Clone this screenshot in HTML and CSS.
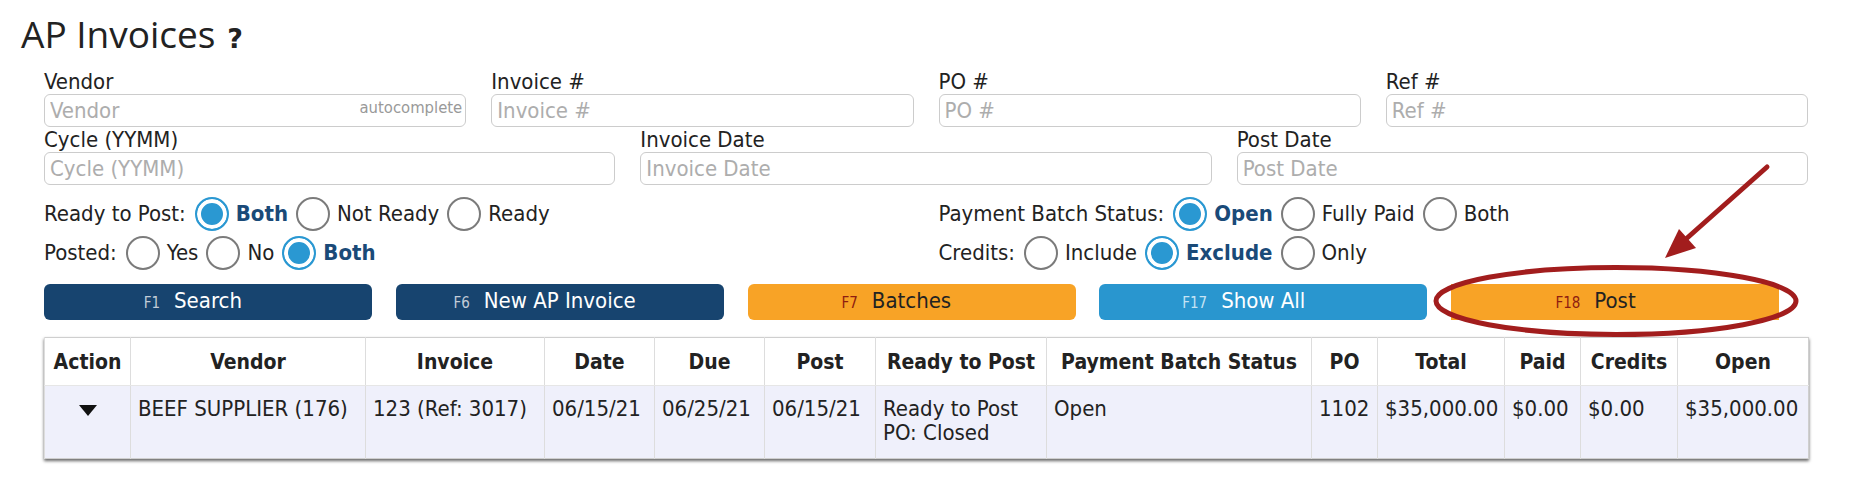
FILE: index.html
```html
<!DOCTYPE html>
<html lang="en">
<head>
<meta charset="utf-8">
<title>AP Invoices</title>
<link rel="stylesheet" href="styles.css">
</head>
<body>
<div class="page">
  <h1 class="title">AP Invoices <span class="help">?</span></h1>
  <form class="filters">
    <div class="grid4">
      <label class="field"><span class="lbl">Vendor</span><span class="input-wrap"><input class="input" placeholder="Vendor"><span class="ac">autocomplete</span></span></label>
      <label class="field"><span class="lbl">Invoice #</span><input class="input" placeholder="Invoice #"></label>
      <label class="field"><span class="lbl">PO #</span><input class="input" placeholder="PO #"></label>
      <label class="field"><span class="lbl">Ref #</span><input class="input" placeholder="Ref #"></label>
    </div>
    <div class="grid3">
      <label class="field"><span class="lbl">Cycle (YYMM)</span><input class="input" placeholder="Cycle (YYMM)"></label>
      <label class="field"><span class="lbl">Invoice Date</span><input class="input" placeholder="Invoice Date"></label>
      <label class="field"><span class="lbl">Post Date</span><input class="input" placeholder="Post Date"></label>
    </div>
    <div class="radios">
      <div class="rrow">
        <span class="rlabel">Ready to Post:</span>
        <label class="opt"><input type="radio" class="radio" name="rtp" checked><span class="otext">Both</span></label>
        <label class="opt"><input type="radio" class="radio" name="rtp"><span class="otext">Not Ready</span></label>
        <label class="opt"><input type="radio" class="radio" name="rtp"><span class="otext">Ready</span></label>
      </div>
      <div class="rrow">
        <span class="rlabel">Payment Batch Status:</span>
        <label class="opt"><input type="radio" class="radio" name="pbs" checked><span class="otext">Open</span></label>
        <label class="opt"><input type="radio" class="radio" name="pbs"><span class="otext">Fully Paid</span></label>
        <label class="opt"><input type="radio" class="radio" name="pbs"><span class="otext">Both</span></label>
      </div>
      <div class="rrow">
        <span class="rlabel">Posted:</span>
        <label class="opt"><input type="radio" class="radio" name="posted"><span class="otext">Yes</span></label>
        <label class="opt"><input type="radio" class="radio" name="posted"><span class="otext">No</span></label>
        <label class="opt"><input type="radio" class="radio" name="posted" checked><span class="otext">Both</span></label>
      </div>
      <div class="rrow">
        <span class="rlabel">Credits:</span>
        <label class="opt"><input type="radio" class="radio" name="credits"><span class="otext">Include</span></label>
        <label class="opt"><input type="radio" class="radio" name="credits" checked><span class="otext">Exclude</span></label>
        <label class="opt"><input type="radio" class="radio" name="credits"><span class="otext">Only</span></label>
      </div>
    </div>
    <div class="buttons">
      <button type="button" class="btn navy"><span class="key">F1</span><span class="txt">Search</span><span></span></button>
      <button type="button" class="btn navy"><span class="key">F6</span><span class="txt">New AP Invoice</span><span></span></button>
      <button type="button" class="btn orange"><span class="key">F7</span><span class="txt">Batches</span><span></span></button>
      <button type="button" class="btn sky"><span class="key">F17</span><span class="txt">Show All</span><span></span></button>
      <button type="button" class="btn orange square"><span class="key">F18</span><span class="txt">Post</span><span></span></button>
    </div>
  </form>
  <table class="grid-table">
    <colgroup>
      <col class="c-action"><col class="c-vendor"><col class="c-invoice"><col class="c-date"><col class="c-due"><col class="c-post"><col class="c-ready"><col class="c-pbs"><col class="c-po"><col class="c-total"><col class="c-paid"><col class="c-credits"><col class="c-open">
    </colgroup>
    <thead>
      <tr>
        <th>Action</th><th>Vendor</th><th>Invoice</th><th>Date</th><th>Due</th><th>Post</th><th>Ready to Post</th><th>Payment Batch Status</th><th>PO</th><th>Total</th><th>Paid</th><th>Credits</th><th>Open</th>
      </tr>
    </thead>
    <tbody>
      <tr>
        <td class="action"><svg class="caret" width="18" height="11" viewBox="0 0 18 11"><path d="M0 0H18L9 11Z" fill="#111"/></svg></td>
        <td>BEEF SUPPLIER (176)</td>
        <td>123 (Ref: 3017)</td>
        <td>06/15/21</td>
        <td>06/25/21</td>
        <td>06/15/21</td>
        <td>Ready to Post<br>PO: Closed</td>
        <td>Open</td>
        <td>1102</td>
        <td>$35,000.00</td>
        <td>$0.00</td>
        <td>$0.00</td>
        <td>$35,000.00</td>
      </tr>
    </tbody>
  </table>
  <svg class="annot" width="1852" height="486" viewBox="0 0 1852 486">
    <ellipse cx="1616" cy="301" rx="180" ry="33.5" fill="none" stroke="#a21d1d" stroke-width="5"/>
    <line x1="1767" y1="167" x2="1686" y2="239" stroke="#a21d1d" stroke-width="5" stroke-linecap="round"/>
    <polygon points="1665,258 1679,229 1696,248" fill="#a21d1d"/>
  </svg>
</div>
</body>
</html>
```
FILE: styles.css
```css
* { box-sizing: border-box; }

body {
  margin: 0;
  font-family: "DejaVu Sans Condensed", "DejaVu Sans", sans-serif;
  font-size: 22px;
  color: #222;
  background: #fff;
}

.page {
  position: relative;
  width: 1852px;
  height: 486px;
  padding-left: 44px;
  overflow: hidden;
}

.title {
  margin: 8px 0 0 -23px;
  height: 52px;
  font-family: "Open Sans", sans-serif;
  font-weight: 400;
  font-size: 37px;
  line-height: 52px;
  color: #222;
}

.help {
  margin-left: 2px;
  font-family: "DejaVu Sans", sans-serif;
  font-weight: bold;
  font-size: 27px;
  line-height: 1;
}

.filters {
  width: 1764px;
  margin-top: 10px;
}

.grid4 {
  display: grid;
  grid-template-columns: repeat(4, 1fr);
  column-gap: 25px;
}

.grid3 {
  display: grid;
  grid-template-columns: repeat(3, 1fr);
  column-gap: 25px;
  margin-top: 1px;
}

.field {
  display: flex;
  flex-direction: column;
}

.lbl {
  height: 24px;
  line-height: 24px;
}

.input-wrap {
  position: relative;
  display: block;
}

.input {
  display: block;
  width: 100%;
  height: 33px;
  margin: 0;
  padding: 0 5px;
  border: 1px solid #ccc;
  border-radius: 6px;
  font-family: inherit;
  font-size: 22px;
  color: #222;
  background: #fff;
}

.input::placeholder { color: #adadad; }

.ac {
  position: absolute;
  right: 4px;
  top: 5px;
  font-size: 16.5px;
  line-height: 18px;
  color: #999;
}

.radios {
  display: grid;
  grid-template-columns: 1fr 1fr;
  column-gap: 25px;
  margin-top: 9px;
}

.rrow {
  display: flex;
  align-items: center;
  gap: 8px;
  height: 39px;
}

.rlabel { margin-right: 1px; }

.opt {
  display: flex;
  align-items: center;
  gap: 7px;
}

.radio {
  appearance: none;
  -webkit-appearance: none;
  margin: 0;
  width: 34px;
  height: 34px;
  border-radius: 50%;
  border: 2px solid #7b7b7b;
  background: #fff;
}

.radio:checked {
  border-color: #2a98d2;
  background: #2a98d2;
  box-shadow: inset 0 0 0 4px #fff;
}

.radio:checked + .otext {
  font-weight: bold;
  color: #1a4a78;
}

.buttons {
  display: grid;
  grid-template-columns: repeat(5, 328px);
  column-gap: 23.75px;
  margin-top: 12px;
}

.btn {
  height: 36px;
  margin: 0;
  padding: 0;
  border: 0;
  border-radius: 6px;
  display: grid;
  grid-template-columns: 1fr auto 1fr;
  align-items: baseline;
  align-content: center;
  font-family: inherit;
  font-size: 22px;
  line-height: 26px;
}

.key {
  justify-self: end;
  margin-right: 14px;
  font-size: 15px;
}

.navy { background: #17446f; color: #fff; }
.navy .key { color: #c2ccd8; }
.orange { background: #f8a326; color: #222; }
.orange .key { color: #8e1c10; }
.sky { background: #2996cf; color: #fff; }
.sky .key { color: #c4e3f4; }
.square { border-radius: 0; }

.grid-table {
  width: 1764px;
  margin-top: 17px;
  table-layout: fixed;
  border-collapse: collapse;
  border: 1px solid #cfcfcf;
  box-shadow: 0 2px 3px rgba(0, 0, 0, 0.6);
}

.c-action { width: 86px; }
.c-vendor { width: 235px; }
.c-invoice { width: 179px; }
.c-date { width: 110px; }
.c-due { width: 110px; }
.c-post { width: 111px; }
.c-ready { width: 171px; }
.c-pbs { width: 265px; }
.c-po { width: 66px; }
.c-total { width: 127px; }
.c-paid { width: 76px; }
.c-credits { width: 97px; }
.c-open { width: 131px; }

.grid-table th {
  height: 48px;
  padding: 0;
  font-size: 21px;
  font-weight: bold;
  text-align: center;
  vertical-align: middle;
  white-space: nowrap;
  background: #fff;
  border-left: 1px solid #ddd;
  border-bottom: 1px solid #e6e6e6;
}

.grid-table td {
  height: 73px;
  padding: 11px 7px 0;
  vertical-align: top;
  line-height: 24px;
  white-space: nowrap;
  background: #eff0fb;
  border-left: 1px solid #ddd;
}

.grid-table td.action { text-align: center; }

.caret {
  display: block;
  margin: 8px auto 0;
}

.annot {
  position: absolute;
  left: 0;
  top: 0;
  pointer-events: none;
}
```
